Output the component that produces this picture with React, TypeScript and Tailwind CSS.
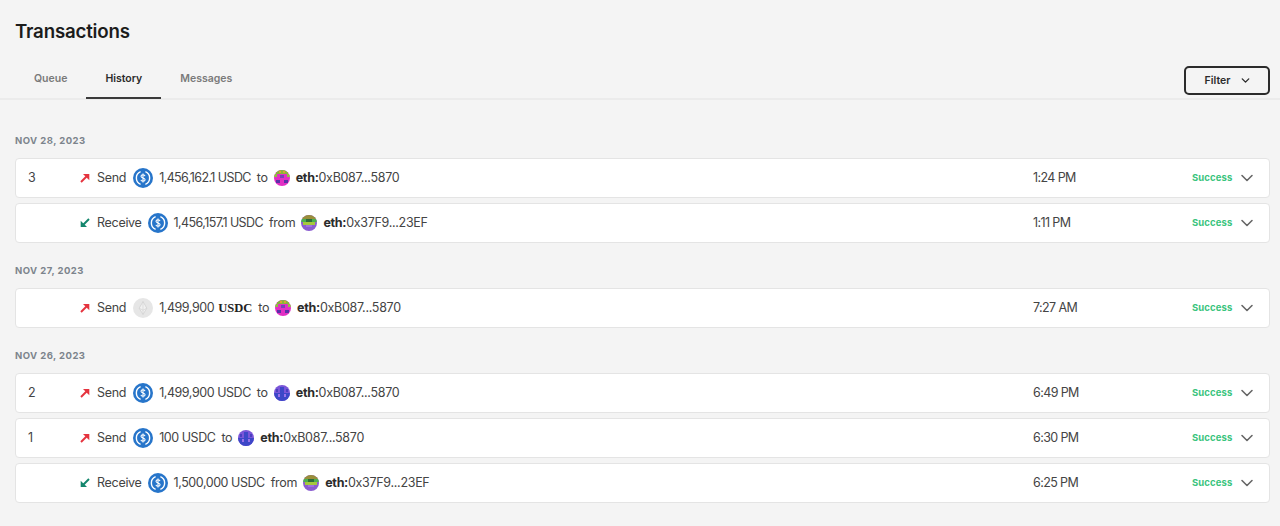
import React from 'react';
import { ChevronDown } from 'lucide-react';

type Tx = {
    nonce?: string;
    kind: 'Send' | 'Receive';
    amount: string;
    token: 'usdc' | 'eth';
    avatar: 'pink' | 'olive' | 'blue';
    address: string;
    time: string;
};

const groups: { date: string; rows: Tx[] }[] = [
    {
        date: 'NOV 28, 2023',
        rows: [
            { nonce: '3', kind: 'Send', amount: '1,456,162.1', token: 'usdc', avatar: 'pink', address: '0xB087...5870', time: '1:24 PM' },
            { kind: 'Receive', amount: '1,456,157.1', token: 'usdc', avatar: 'olive', address: '0x37F9...23EF', time: '1:11 PM' },
        ],
    },
    {
        date: 'NOV 27, 2023',
        rows: [
            { kind: 'Send', amount: '1,499,900', token: 'eth', avatar: 'pink', address: '0xB087...5870', time: '7:27 AM' },
        ],
    },
    {
        date: 'NOV 26, 2023',
        rows: [
            { nonce: '2', kind: 'Send', amount: '1,499,900', token: 'usdc', avatar: 'blue', address: '0xB087...5870', time: '6:49 PM' },
            { nonce: '1', kind: 'Send', amount: '100', token: 'usdc', avatar: 'blue', address: '0xB087...5870', time: '6:30 PM' },
            { kind: 'Receive', amount: '1,500,000', token: 'usdc', avatar: 'olive', address: '0x37F9...23EF', time: '6:25 PM' },
        ],
    },
];

const DirectionArrow = ({ kind }: { kind: Tx['kind'] }) =>
    kind === 'Send' ? (
        <svg width="10" height="10" viewBox="0 0 10 10" fill="none" className="shrink-0">
            <path d="M1 9L7.5 2.5" stroke="#e5343f" strokeWidth="1.9" />
            <path d="M3 1H9.3V7.3Z" fill="#e5343f" />
        </svg>
    ) : (
        <svg width="10" height="10" viewBox="0 0 10 10" fill="none" className="shrink-0">
            <path d="M9 1L2.5 7.5" stroke="#14866d" strokeWidth="1.9" />
            <path d="M0.7 2.7V9H7Z" fill="#14866d" />
        </svg>
    );

const UsdcIcon = () => (
    <svg width="20" height="20" viewBox="0 0 20 20" className="shrink-0">
        <circle cx="10" cy="10" r="10" fill="#2775ca" />
        <path d="M7.6 3.7A6.8 6.8 0 0 0 7.6 16.3M12.4 3.7A6.8 6.8 0 0 1 12.4 16.3" fill="none" stroke="#fff" strokeWidth="1.4" />
        <path d="M12 8.2C11.8 7.2 11 6.8 10 6.8C8.8 6.8 8 7.4 8 8.3C8 9.3 8.9 9.7 10 10C11.1 10.3 12.1 10.7 12.1 11.7C12.1 12.6 11.2 13.2 10 13.2C8.9 13.2 8.1 12.7 7.9 11.8M10 5.6V14.4" fill="none" stroke="#fff" strokeWidth="1.1" />
    </svg>
);

const EthIcon = () => (
    <svg width="20" height="20" viewBox="0 0 20 20" className="shrink-0">
        <circle cx="10" cy="10" r="10" fill="#e6e6e6" />
        <path d="M10 3.5L6.2 10.2L10 16.5L13.8 10.2Z" fill="#f1f1f1" stroke="#d2d2d2" strokeWidth="0.8" />
        <path d="M6.2 10.2L10 12.2L13.8 10.2M10 3.5V16.5" fill="none" stroke="#d2d2d2" strokeWidth="0.7" />
    </svg>
);

const Avatar = ({ type }: { type: Tx['avatar'] }) => {
    if (type === 'pink') {
        return (
            <svg width="16" height="16" viewBox="0 0 16 16" className="shrink-0">
                <defs><clipPath id="pink-clip"><circle cx="8" cy="8" r="8" /></clipPath></defs>
                <g clipPath="url(#pink-clip)">
                    <rect width="16" height="16" fill="#e22fc4" />
                    <rect x="2" y="0" width="12" height="4" fill="#86b63c" />
                    <rect x="0" y="4" width="3" height="3" fill="#8fc23f" />
                    <rect x="13" y="4" width="3" height="3" fill="#8fc23f" />
                    <rect x="5" y="1" width="2" height="2" fill="#d9a62e" />
                    <rect x="9" y="1" width="2" height="2" fill="#d9a62e" />
                    <rect x="6" y="5" width="4" height="3" fill="#7a3fb8" />
                    <rect x="2" y="10" width="4" height="3" fill="#5c2fa8" />
                    <rect x="10" y="10" width="4" height="3" fill="#5c2fa8" />
                </g>
            </svg>
        );
    }
    if (type === 'olive') {
        return (
            <svg width="16" height="16" viewBox="0 0 16 16" className="shrink-0">
                <defs><clipPath id="olive-clip"><circle cx="8" cy="8" r="8" /></clipPath></defs>
                <g clipPath="url(#olive-clip)">
                    <rect width="16" height="16" fill="#8a5cd0" />
                    <rect y="0" width="16" height="4" fill="#9a8f3a" />
                    <rect y="4" width="16" height="3" fill="#4caf50" />
                    <rect x="2" y="7" width="12" height="3" fill="#a5c83c" />
                    <rect x="5" y="4" width="6" height="3" fill="#2f6b3a" />
                    <rect x="5" y="10" width="6" height="2" fill="#a070e0" />
                </g>
            </svg>
        );
    }
    return (
        <svg width="16" height="16" viewBox="0 0 16 16" className="shrink-0">
            <defs><clipPath id="blue-clip"><circle cx="8" cy="8" r="8" /></clipPath></defs>
            <g clipPath="url(#blue-clip)">
                <rect width="16" height="16" fill="#7a55d8" />
                <rect x="0" y="8" width="16" height="8" fill="#3d47c8" />
                <rect x="6" y="2" width="4" height="6" fill="#3d47c8" />
                <rect x="2" y="4" width="2" height="3" fill="#4a3fc0" />
                <rect x="12" y="4" width="2" height="3" fill="#4a3fc0" />
                <rect x="4" y="9" width="2" height="3" fill="#9a72ea" />
                <rect x="10" y="9" width="2" height="3" fill="#9a72ea" />
            </g>
        </svg>
    );
};

const Row = ({ tx }: { tx: Tx }) => (
    <div className="flex items-center h-10 bg-white border border-[#e4e4e4] rounded-[4px] text-[#444]">
        <div className="w-[64px] pl-3 shrink-0">{tx.nonce}</div>
        <DirectionArrow kind={tx.kind} />
        <div className="flex-1 flex items-center min-w-0 pl-[7px]">
            <span>{tx.kind}</span>
            <span className={tx.kind === 'Send' ? 'ml-[7px] mr-[6px]' : 'ml-[6px] mr-[6px]'}>
                {tx.token === 'eth' ? <EthIcon /> : <UsdcIcon />}
            </span>
            <span className={tx.amount.includes('.') ? 'tracking-[-0.6px]' : 'tracking-[-0.45px]'}>
                {tx.amount}{' '}
                {tx.token === 'eth' ? (
                    <span className="ml-[1px] font-bold tracking-normal text-[#222]" style={{ fontFamily: '"Liberation Serif", serif' }}>USDC</span>
                ) : (
                    'USDC'
                )}
            </span>
            <span className="ml-[6px] mr-[6px]">{tx.kind === 'Send' ? 'to' : 'from'}</span>
            <Avatar type={tx.avatar} />
            <span className="ml-[6px]">
                <span className="font-bold text-[#2b2b2b]">eth:</span>
                {tx.address}
            </span>
        </div>
        <div className="w-[159px] shrink-0 tracking-[-0.6px]">{tx.time}</div>
        <div className="w-[45px] shrink-0 text-[9.5px] font-bold tracking-[0.1px] text-[#3ac47d]">Success</div>
        <ChevronDown size={20} strokeWidth={1.9} className="text-[#666] shrink-0" />
        <div className="w-[12px] shrink-0" />
    </div>
);

export default function App() {
    return (
        <div className="min-h-[526px] bg-[#f4f4f4] text-[12.5px] tracking-[-0.3px] text-[#444]" style={{ fontFamily: 'Inter, sans-serif' }}>
            <div className="border-b-2 border-[#ebebeb]">
                <div className="pl-[15px] pt-[18px] h-[45px]">
                    <h1 className="text-[18.7px] leading-7 font-semibold text-[#1c1c1c] tracking-[-0.2px]">Transactions</h1>
                </div>
                <div className="flex items-end justify-between h-[53px] pl-[15px] pr-[10px]">
                    <div className="flex text-[10.5px] font-semibold tracking-normal">
                        <div className="h-[41px] -mb-[1px] flex items-center pt-[3px] px-[19px] text-[#7a7a7a] border-b-2 border-transparent">Queue</div>
                        <div className="h-[41px] -mb-[1px] flex items-center pt-[3px] px-[19px] text-[#2b2b2b] border-b-2 border-[#3a3a3a]">History</div>
                        <div className="h-[41px] -mb-[1px] flex items-center pt-[3px] px-[19px] text-[#7a7a7a] border-b-2 border-transparent">Messages</div>
                    </div>
                    <button className="flex items-center justify-center pl-[3px] gap-[9px] w-[86px] h-[29px] mb-[3px] border-2 border-[#2b2b2b] rounded-[5px] text-[10.5px] font-semibold tracking-normal text-[#2b2b2b]">
                        Filter
                        <ChevronDown size={13} strokeWidth={2.5} />
                    </button>
                </div>
            </div>
            <div className="pl-[15px] pr-[10px] pt-[33px]">
                {groups.map(group => (
                    <div key={group.date} className="mb-[20px]">
                        <div className="h-4 mb-[9px] flex items-center text-[9.5px] font-bold tracking-[0.45px] text-[#7c848c]">{group.date}</div>
                        <div className="flex flex-col gap-[5px]">
                            {group.rows.map(tx => (
                                <Row key={tx.time} tx={tx} />
                            ))}
                        </div>
                    </div>
                ))}
            </div>
        </div>
    );
}
